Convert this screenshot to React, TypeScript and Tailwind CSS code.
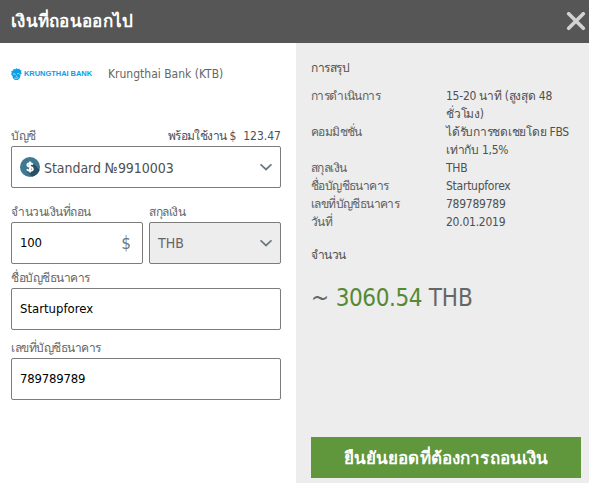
import type { ReactNode } from "react";

const summary = [
  { label: "การดำเนินการ", value: ["15-20 นาที (สูงสุด 48", "ชั่วโมง)"] },
  { label: "คอมมิชชั่น", value: ["ได้รับการชดเชยโดย FBS", "เท่ากับ 1,5%"] },
  { label: "สกุลเงิน", value: ["THB"] },
  { label: "ชื่อบัญชีธนาคาร", value: ["Startupforex"] },
  { label: "เลขที่บัญชีธนาคาร", value: ["789789789"] },
  { label: "วันที่", value: ["20.01.2019"] },
];

const CloseIcon = () => (
  <svg className="w-5 h-5" viewBox="0 0 20 20" fill="none">
    <path
      d="M2.7 1.7 17.3 16.3M17.3 1.7 2.7 16.3"
      stroke="#d2d2d2"
      strokeWidth="3.6"
      strokeLinecap="round"
    />
  </svg>
);

const ChevronIcon = () => (
  <svg className="w-3 h-2 shrink-0" viewBox="0 0 12 8" fill="none">
    <path d="M.5 1.3 6 6.5l5.5-5.2" stroke="#6b7a80" strokeWidth="1.8" />
  </svg>
);

const DollarBadge = () => (
  <svg className="w-5 h-5 shrink-0" viewBox="0 0 20 20">
    <circle cx="10" cy="10" r="10" fill="#3f7890" />
    <path d="M12.5 5.5 19.6 12.8A10 10 0 0 1 12 19.8L7 14.5Z" fill="#294f62" />
    <path
      d="M12.8 7.6C12.2 6.7 11.2 6.3 10 6.3 8.4 6.3 7.4 7 7.4 8.1c0 2.5 5.4 1.2 5.4 3.8 0 1.1-1.1 1.8-2.7 1.8-1.4 0-2.5-.5-3.1-1.5M10 4.6v10.8"
      fill="none"
      stroke="#fff"
      strokeWidth="1.9"
    />
  </svg>
);

const BankLogo = () => (
  <div className="flex items-center w-[82px] h-3 text-[#0ba0e6]">
    <svg className="w-[11px] h-3 shrink-0" viewBox="0 0 11 12">
      <path
        d="M5.5 0 6.4 1.1 8.6.8 8.8 2.1 10.6 2.6 10 4.2 11 5.3 9.5 6.2 9.2 8.9C8.5 11 7.2 12 5.2 12 3 11.7 1.6 10.5 1.5 8.2L0 6.3.8 4.7.2 3.3 2.2 2.4 2.4.9 4.7 1.2Z"
        fill="currentColor"
      />
      <path
        d="M1.8 6.5c1-.9 2-.7 2.8.1M6.2 6c.9-.7 1.8-.6 2.4.1M4.8 8.2l1.3.1M3.3 9.9c1.6.8 3 .5 4.2-.6"
        fill="none"
        stroke="#fff"
        strokeWidth=".7"
      />
    </svg>
    <span className="ml-[2px] font-['Liberation_Sans',sans-serif] text-[7.5px] leading-3 font-bold tracking-[-0.05px] whitespace-nowrap">
      KRUNGTHAI BANK
    </span>
  </div>
);

const Label = ({ children }: { children: ReactNode }) => (
  <div className="h-5 pt-px tracking-[-0.5px]">{children}</div>
);

const Box = ({
  children,
  className = "bg-white",
}: {
  children: ReactNode;
  className?: string;
}) => (
  <div
    className={`h-[42px] border border-[#7c7c7c] rounded-[2px] flex items-center px-2 ${className}`}
  >
    {children}
  </div>
);

export default function App() {
  return (
    <div className="w-[589px] h-[483px] flex flex-col overflow-hidden bg-white font-['DejaVu_Sans_Condensed','Noto_Sans',serif] text-[12px] leading-[18px] text-[#666] whitespace-nowrap">
      <header className="h-[43px] shrink-0 bg-[#565656] flex items-center justify-between pl-[11px] pr-[3px]">
        <h1 className="pb-0.5 text-[17px] font-bold text-white tracking-[0.3px]">
          เงินที่ถอนออกไป
        </h1>
        <CloseIcon />
      </header>

      <div className="flex flex-1">
        <main className="w-[296px] pl-[11px] pr-[15px] flex flex-col">
          <div className="mt-[22px] h-[18px] flex items-center gap-[15px]">
            <BankLogo />
            <span>Krungthai Bank (KTB)</span>
          </div>

          <div className="mt-[43px] flex justify-between">
            <Label>บัญชี</Label>
            <div className="pt-px flex gap-[3px] text-[#505050]">
              <span className="tracking-[-0.6px]">พร้อมใช้งาน</span>
              <span>$&nbsp; 123.47</span>
            </div>
          </div>
          <Box>
            <DollarBadge />
            <span className="ml-1 pt-0.5 flex-1 text-[14px] tracking-[-0.05px] text-[#505050]">
              Standard №9910003
            </span>
            <ChevronIcon />
          </Box>

          <div className="mt-[14px] flex gap-1.5">
            <div className="flex-1">
              <Label>จำนวนเงินที่ถอน</Label>
              <Box>
                <span className="flex-1 text-[13px] tracking-[-0.2px] text-black">100</span>
                <span className="mr-[3px] text-[17px] text-[#6b7a80]">$</span>
              </Box>
            </div>
            <div className="flex-1">
              <Label>สกุลเงิน</Label>
              <Box className="bg-[#ededed]">
                <span className="flex-1 text-[14px]">THB</span>
                <ChevronIcon />
              </Box>
            </div>
          </div>

          <div className="mt-1">
            <Label>ชื่อบัญชีธนาคาร</Label>
          </div>
          <Box>
            <span className="text-[13px] text-black">Startupforex</span>
          </Box>

          <div className="mt-2">
            <Label>เลขที่บัญชีธนาคาร</Label>
          </div>
          <Box>
            <span className="text-[13px] tracking-[-0.2px] text-black">789789789</span>
          </Box>
        </main>

        <aside className="flex-1 bg-[#ededed] pl-[15px] pr-2 pt-4 pb-[5px] flex flex-col text-[#505050]">
          <h2 className="tracking-[-0.5px]">การสรุป</h2>
          <dl className="mt-2.5">
            {summary.map(({ label, value }) => (
              <div key={label} className="flex">
                <dt className="w-[135px] tracking-[-0.6px] text-[#606060]">{label}</dt>
                <dd className="tracking-[-0.25px]">
                  {value.map((line) => (
                    <div key={line}>{line}</div>
                  ))}
                </dd>
              </div>
            ))}
          </dl>
          <h2 className="mt-[15px] tracking-[-0.6px]">จำนวน</h2>
          <p className="mt-[15px] pt-0.5 text-[24px] leading-[35px] tracking-[-0.15px] text-[#666]">
            ~ <span className="tracking-[-0.4px] text-[#568a32]">3060.54</span> THB
          </p>
          <button className="mt-auto h-[41px] bg-[#60963c] text-white text-[17px] font-bold tracking-[0.15px]">
            ยืนยันยอดที่ต้องการถอนเงิน
          </button>
        </aside>
      </div>
    </div>
  );
}
